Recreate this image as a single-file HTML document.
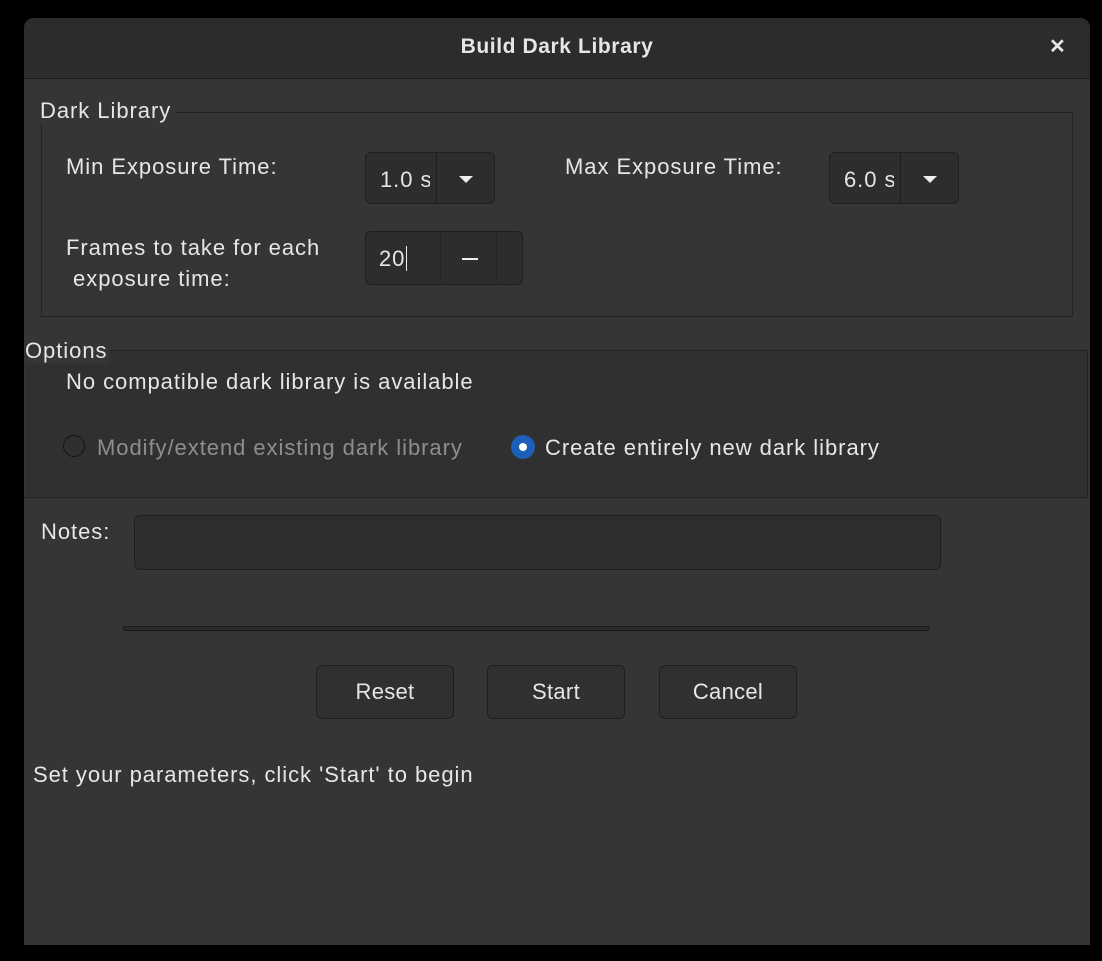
<!DOCTYPE html>
<html><head><meta charset="utf-8"><style>
body{margin:0;width:1102px;height:961px;background:#000;position:relative;overflow:hidden;font-family:"Liberation Sans",sans-serif;color:#e6e6e6;font-size:22px}
.a{position:absolute}
.win{left:24px;top:18px;width:1066px;height:927px;background:#353535;border-radius:10px 10px 0 0;overflow:hidden}
.title{left:0;top:0;width:1066px;height:60px;background:#2c2c2c;border-bottom:1px solid #1c1c1c}
.t{white-space:nowrap;letter-spacing:0.95px}
.combo{background:#2d2d2d;border:1px solid #1f1f1f;border-radius:6px;height:52px;box-sizing:border-box}
.btn{background:#303030;border:1px solid #1e1e1e;border-radius:6px;width:138px;height:54px;box-sizing:border-box;text-align:center;line-height:52px;font-size:22px;letter-spacing:0.3px}
.tri{width:0;height:0;border-left:7px solid transparent;border-right:7px solid transparent;border-top:7px solid #eee}
</style></head><body>
<div class="a win">
 <div class="a title"><div class="a t" style="left:0;width:1066px;text-align:center;top:17px;font-weight:bold;font-size:21px;letter-spacing:0.6px">Build Dark Library</div>
 <div class="a" style="left:1025px;top:16px;font-size:20px;font-weight:bold">✕</div></div>
</div>
<div class="a" style="left:41px;top:112px;width:1030px;height:203px;border:1px solid #222"></div>
<div class="a t" style="left:40px;top:98px;background:#353535;padding-right:4px">Dark Library</div>
<div class="a t" style="left:66px;top:154px">Min Exposure Time:</div>
<div class="a combo" style="left:365px;top:152px;width:130px"><div class="a t" style="left:14px;top:14px;width:50px;overflow:hidden">1.0 s</div><div class="a" style="left:70px;top:0;width:1px;height:50px;background:#1f1f1f"></div><div class="a tri" style="left:93px;top:23px"></div></div>
<div class="a t" style="left:565px;top:154px">Max Exposure Time:</div>
<div class="a combo" style="left:829px;top:152px;width:130px"><div class="a t" style="left:14px;top:14px;width:50px;overflow:hidden">6.0 s</div><div class="a" style="left:70px;top:0;width:1px;height:50px;background:#1f1f1f"></div><div class="a tri" style="left:93px;top:23px"></div></div>
<div class="a t" style="left:66px;top:232px;line-height:31px">Frames to take for each<br>&nbsp;exposure time:</div>
<div class="a combo" style="left:365px;top:231px;width:158px;height:54px"><div class="a t" style="left:13px;top:14px">20<span style="border-left:1px solid #eee;margin-left:1px"></span></div><div class="a" style="left:74px;top:0;width:1px;height:52px;background:#262626"></div><div class="a" style="left:96px;top:26px;width:16px;height:2px;background:#eee"></div><div class="a" style="left:130px;top:0;width:1px;height:52px;background:#262626"></div></div>
<div class="a" style="left:25px;top:350px;width:1062px;height:146px;border-top:1px solid #222;border-bottom:1px solid #222;border-right:1px solid #222;background:#303030"></div>
<div class="a t" style="left:25px;top:338px;background:#353535;padding-right:3px">Options</div>
<div class="a t" style="left:66px;top:369px">No compatible dark library is available</div>
<div class="a" style="left:63px;top:435px;width:22px;height:22px;border-radius:50%;border:1px solid #141414;background:#2f2f2f;box-sizing:border-box"></div>
<div class="a t" style="left:97px;top:435px;color:#8e8e8e">Modify/extend existing dark library</div>
<div class="a" style="left:511px;top:435px;width:24px;height:24px;border-radius:50%;background:#1c5fb8"></div>
<div class="a" style="left:519px;top:443px;width:8px;height:8px;border-radius:50%;background:#fff"></div>
<div class="a t" style="left:545px;top:435px">Create entirely new dark library</div>
<div class="a t" style="left:41px;top:519px">Notes:</div>
<div class="a" style="left:134px;top:515px;width:807px;height:55px;background:#2e2e2e;border:1px solid #1f1f1f;border-radius:6px;box-sizing:border-box"></div>
<div class="a" style="left:122px;top:626px;width:808px;height:5px;background:#2a2a2a;border:1px solid #1c1c1c;border-radius:3px;box-sizing:border-box"></div>
<div class="a btn" style="left:316px;top:665px">Reset</div>
<div class="a btn" style="left:487px;top:665px">Start</div>
<div class="a btn" style="left:659px;top:665px">Cancel</div>
<div class="a t" style="left:33px;top:762px">Set your parameters, click 'Start' to begin</div>
</body></html>
